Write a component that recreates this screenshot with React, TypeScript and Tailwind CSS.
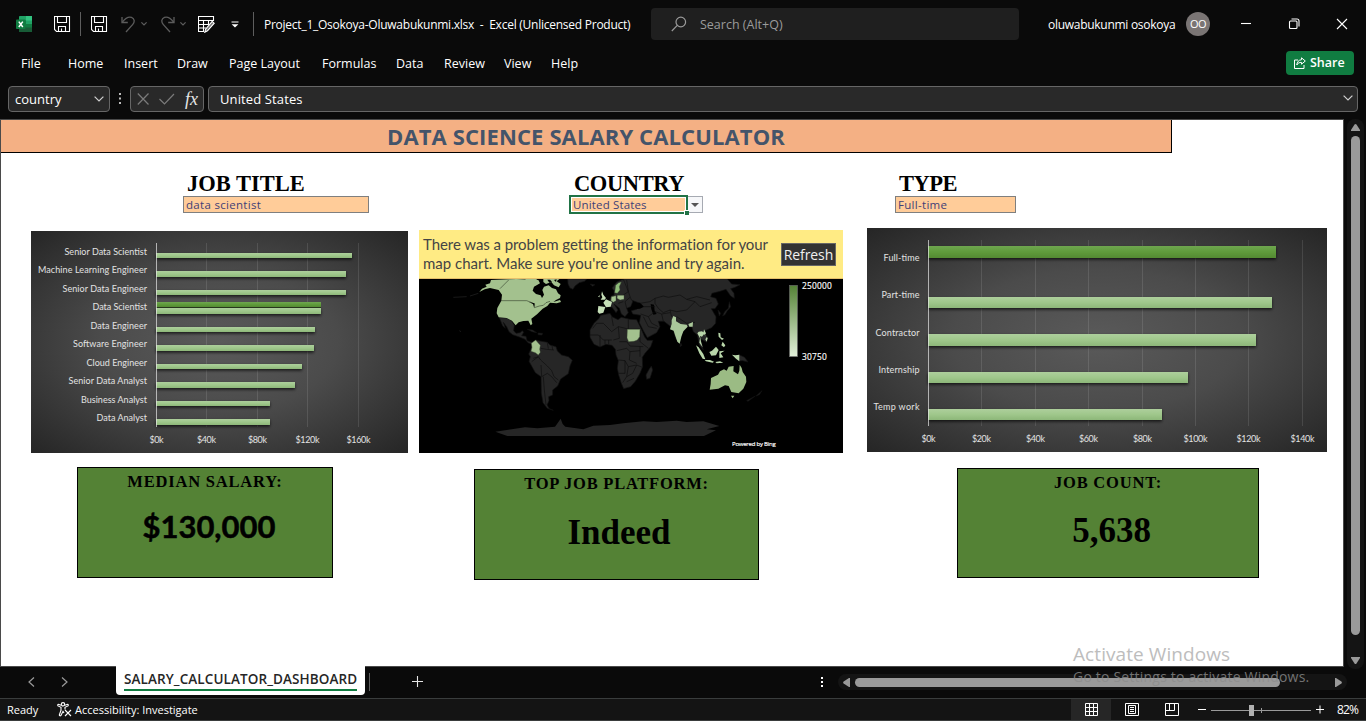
import React from "react";

const ui = "font-['Open_Sans','Noto_Sans',sans-serif]";
const calibri = "font-['Lato','Open_Sans',sans-serif]";
const serif = "font-['Liberation_Serif',serif]";

/* ---------- Icons ---------- */

function ExcelLogo() {
  return (
    <svg width="16" height="16" viewBox="0 0 16 16" className="shrink-0">
      <rect x="3" y="0" width="13" height="16" rx="0.8" fill="#21a366" />
      <rect x="10" y="0" width="6" height="4.5" fill="#33c481" />
      <rect x="3" y="4.5" width="7" height="7" fill="#107c41" />
      <rect x="3" y="11" width="13" height="5" fill="#185c37" />
      <rect x="10" y="8" width="6" height="3.5" fill="#107c41" />
      <rect x="0" y="3.5" width="9.5" height="9.5" rx="0.8" fill="#107c41" />
      <path d="M2.8 5.6 6.8 11M6.8 5.6 2.8 11" stroke="#fff" strokeWidth="1.5" />
    </svg>
  );
}

function SaveIcon() {
  return (
    <svg width="17" height="17" viewBox="0 0 17 17" fill="none" stroke="#fff" strokeWidth="1.1" className="shrink-0">
      <path d="M.5.5H15.5V15.5H2.5L.5 13.5Z" />
      <path d="M3.5.5V6.5H12.5V.5" />
      <path d="M4.5 15.5V10.5H11.5V15.5M7.5 12.5V15.5" />
    </svg>
  );
}

function UndoIcon({ flip }: { flip?: boolean }) {
  return (
    <svg width="15" height="17" viewBox="0 0 15 17" fill="none" stroke="#5c5c5c" strokeWidth="1.3" className={flip ? "shrink-0 -scale-x-100" : "shrink-0"}>
      <path d="M1 1V6.5H6.8" />
      <path d="M1.2 6.3C4.5 2 7.5.4 10.5 1.4c3.2 1.2 3.4 4.6 1.3 7L5 16" />
    </svg>
  );
}

function Chevron({ w = 6, color = "#5c5c5c", sw = 1.2 }: { w?: number; color?: string; sw?: number }) {
  return (
    <svg width={w} height={w * 0.6} viewBox="0 0 10 6" fill="none" stroke={color} strokeWidth={(sw * 10) / w} className="shrink-0">
      <path d="M.6.6 5 5 9.4.6" />
    </svg>
  );
}

function TablePenIcon() {
  return (
    <svg width="17" height="17" viewBox="0 0 17 17" fill="none" stroke="#fff" strokeWidth="1.1" className="shrink-0">
      <path d="M15.5 5V.5H.5V15.5H6M.5 4.5H15.5M.5 8.5H11M.5 12H8M5.5 4.5V15.4M10.5 4.5V9" />
      <path d="M14.2 5.4 16.2 7.2 9.5 14.8 6.8 16.2 7.6 13.2Z" fill="#777" />
    </svg>
  );
}

function ShareIcon() {
  return (
    <svg width="12" height="12" viewBox="0 0 12 12" fill="none" stroke="#fff" strokeWidth="1">
      <path d="M4 3H.5V11.5H10V8" />
      <path d="M7.5.8 11.3 4 7.5 7.2V5.4C5.3 5.3 4 6.1 2.8 8 3 5 4.6 3 7.5 2.7Z" />
    </svg>
  );
}

function AccessibilityIcon() {
  return (
    <svg width="15" height="15" viewBox="0 0 15 15" fill="none" stroke="#fff" strokeWidth="1.1">
      <circle cx="6" cy="2.3" r="1.7" />
      <path d="M4.2 3.3 1.3 2.3Q.3 2.8 1 3.9L4 5.3V8.3L2.3 13Q2.8 14.4 3.9 13.6L6 9.3 7 11M7.8 3.3 10.7 2.3Q11.7 2.8 11 3.9L8 5.3V7.5" />
      <path d="M8 8 14 14M14 8 8 14" />
    </svg>
  );
}

/* ---------- Charts ---------- */

type Bar = { label: string; lw: number; base: number; y: number; h: number; end: number };

const titleBars: Bar[] = [
  { label: "Senior Data Scientist", lw: 82.5, base: 24, y: 22, h: 5, end: 321 },
  { label: "Machine Learning Engineer", lw: 109, base: 42, y: 40, h: 6, end: 315 },
  { label: "Senior Data Engineer", lw: 84.5, base: 61, y: 59, h: 5, end: 315 },
  { label: "Data Scientist", lw: 54.5, base: 79, y: 77, h: 6, end: 290 },
  { label: "Data Engineer", lw: 56.5, base: 98, y: 96, h: 5, end: 284 },
  { label: "Software Engineer", lw: 74, base: 116, y: 114, h: 6, end: 283 },
  { label: "Cloud Engineer", lw: 60.5, base: 135, y: 133, h: 5, end: 271 },
  { label: "Senior Data Analyst", lw: 78.5, base: 153, y: 151, h: 6, end: 264 },
  { label: "Business Analyst", lw: 66, base: 172, y: 170, h: 5, end: 239 },
  { label: "Data Analyst", lw: 50.5, base: 190, y: 188, h: 6, end: 239 },
];

const typeBars: Bar[] = [
  { label: "Full-time", lw: 36, base: 33, y: 18, h: 12, end: 409 },
  { label: "Part-time", lw: 38, base: 70, y: 69, h: 11, end: 405 },
  { label: "Contractor", lw: 44, base: 108, y: 106, h: 12, end: 389 },
  { label: "Internship", lw: 41, base: 145, y: 144, h: 11, end: 321 },
  { label: "Temp work", lw: 46, base: 182, y: 181, h: 11, end: 295 },
];

type ChartProps = {
  id: string;
  w: number;
  h: number;
  axis: number;
  top: number;
  bottom: number;
  labelX: number;
  ticks: { x: number; t: string; w: number }[];
  tickBase: number;
  bars: Bar[];
  accent: { y: number; h: number; end: number };
};

function BarChart({ id, w, h, axis, top, bottom, labelX, ticks, tickBase, bars, accent }: ChartProps) {
  return (
    <svg width={w} height={h} viewBox={`0 0 ${w} ${h}`} className={`block shrink-0 ${calibri}`}>
      <defs>
        <radialGradient id={`${id}-bg`} cx="50%" cy="50%" r="70%">
          <stop offset="0" stopColor="#5a5a5a" />
          <stop offset="0.45" stopColor="#4b4b4b" />
          <stop offset="1" stopColor="#262626" />
        </radialGradient>
        <linearGradient id={`${id}-light`} x2="0" y2="1">
          <stop offset="0" stopColor="#adcf9c" />
          <stop offset="0.5" stopColor="#9fc78b" />
          <stop offset="1" stopColor="#8db779" />
        </linearGradient>
        <linearGradient id={`${id}-dark`} x2="0" y2="1">
          <stop offset="0" stopColor="#6fa650" />
          <stop offset="0.5" stopColor="#5f9b3b" />
          <stop offset="1" stopColor="#548a32" />
        </linearGradient>
        <filter id={`${id}-shadow`} x="-5%" y="-60%" width="110%" height="260%">
          <feDropShadow dx="0" dy="1.6" stdDeviation="1.6" floodColor="#000" floodOpacity="0.7" />
        </filter>
      </defs>
      <rect width={w} height={h} fill={`url(#${id}-bg)`} />
      {ticks.slice(1).map((t) => (
        <path key={t.t} d={`M${t.x + 0.5} ${top}V${bottom}`} stroke="#fff" strokeOpacity="0.11" />
      ))}
      {bars.map((b, i) => (
        <rect
          key={b.label}
          x={axis}
          y={b.y}
          width={b.end - axis}
          height={b.h}
          fill={id === "type" && i === 0 ? `url(#${id}-dark)` : `url(#${id}-light)`}
          filter={`url(#${id}-shadow)`}
        />
      ))}
      {id === "title" && (
        <>
          <rect x={axis} y={accent.y} width={accent.end - axis} height={accent.h + 1} fill="#27361d" />
          <rect x={axis} y={accent.y} width={accent.end - axis} height={accent.h} fill={`url(#${id}-dark)`} />
        </>
      )}
      <path d={`M${axis + 0.5} ${top}V${bottom}`} stroke="#e6e6e6" strokeOpacity="0.7" />
      <g fill="#e2e2e2" fontSize="9">
        {bars.map((b) => (
          <text key={b.label} x={labelX - b.lw} y={b.base} textLength={b.lw}>
            {b.label}
          </text>
        ))}
        {ticks.map((t) => (
          <text key={t.t} x={t.x + 0.5 - t.w / 2} y={tickBase} textLength={t.w}>
            {t.t}
          </text>
        ))}
      </g>
    </svg>
  );
}

const titleTicks = [
  { x: 125, t: "$0k", w: 14 },
  { x: 175, t: "$40k", w: 19 },
  { x: 226, t: "$80k", w: 19 },
  { x: 276, t: "$120k", w: 24 },
  { x: 327, t: "$160k", w: 24 },
];

const typeTicks = [
  { x: 61, t: "$0k", w: 14 },
  { x: 114, t: "$20k", w: 19 },
  { x: 168, t: "$40k", w: 19 },
  { x: 221, t: "$60k", w: 19 },
  { x: 275, t: "$80k", w: 19 },
  { x: 328, t: "$100k", w: 24 },
  { x: 381, t: "$120k", w: 24 },
  { x: 435, t: "$140k", w: 24 },
];

function WorldMap() {
  return (
    <svg width="424" height="174" viewBox="27 357 1272 522" className={`block bg-black ${ui}`}>
      <defs>
        <linearGradient id="legend" x2="0" y2="1">
          <stop offset="0" stopColor="#548235" />
          <stop offset="1" stopColor="#e2f0d9" />
        </linearGradient>
      </defs>
      <g fill="#262626" stroke="#111" strokeWidth="2" strokeLinejoin="round">
        {/* Greenland, Iceland */}
        <path d="M473 357H530L524 364 508 368 495 378 489 388 480 384 474 372ZM540 372 555 374 548 379Z" />
        {/* Mexico and Central America */}
        <path d="M268 473 290 474 305 482 313 496 311 512 318 520 330 518 337 512 341 517 335 527 348 529 351 542 362 546 372 547 368 553 355 549 345 538 328 531 308 524 297 515 290 500 280 487 286 505 278 498Z" />
        <path d="M352 508 368 510 380 518 366 515ZM384 519 398 520 396 525 384 524Z" />
        {/* South America */}
        <path d="M378 540 390 543 412 547 420 555 438 560 442 573 455 585 475 590 487 601 480 618 475 641 452 657 443 678 428 690 428 705 416 710 417 722 411 735 418 746 430 751 412 745 399 728 394 700 393 650 376 638 366 620 357 604 361 590 356 582 364 565 366 548Z" />
        {/* Africa */}
        <path d="M572 466 600 460 606 470 624 479 634 472 660 478 680 479 692 503 704 531 712 541 729 541 722 560 705 580 697 592 698 620 690 640 676 664 662 680 641 686 634 670 626 645 622 625 625 602 618 585 616 568 606 556 588 553 570 561 552 553 540 532 540 510 552 490 566 476Z" />
        <path d="M724 618 728 630 720 655 710 658 708 645 716 630Z" />
        {/* Europe */}
        <path d="M612 392 606 384 620 366 636 359 660 361 670 380 662 400 668 425 662 440 650 445 655 458 645 470 634 462 628 445 612 432 624 450 618 458 606 442 598 440 598 424 604 408 612 405Z" />
        {/* Asia */}
        <path d="M640 357H952L965 372 990 374 975 382 962 386 972 400 973 415 962 408 948 388 930 394 906 400 902 410 918 415 925 432 915 446 904 446 918 470 917 490 905 503 885 512 884 520 894 534 890 547 878 540 872 538 880 570 868 555 862 525 850 515 845 500 830 500 812 525 807 550 797 535 788 505 776 495 762 484 745 484 750 500 740 518 712 533 700 512 688 488 692 466 668 462 664 452 680 448 690 430 664 420 655 395Z" />
        <path d="M958 425 962 440 950 455 945 464 938 468 944 455 955 445ZM924 450 932 460 928 468ZM812 548 816 556 810 560Z" />
        {/* Papua New Guinea, New Zealand */}
        <path d="M987 584 1004 592 1014 606 998 602 987 603ZM1056 692 1048 704 1038 708ZM1036 708 1014 724 1010 722Z" />
        {/* Antarctica */}
        <path stroke="none" d="M256 815 305 808 345 802 382 805 435 800 441 792 452 776 458 792 466 800 520 808 550 797 600 795 640 790 700 784 740 786 800 782 830 786 880 784 928 798 890 808 918 811 882 828H292Z" />
      </g>
      {/* Inland seas */}
      <path fill="#000" d="M664 440 676 430 690 428 702 440 690 446 668 448ZM722 432 732 434 734 452 740 462 730 464 724 448Z" />
      {/* Borders */}
      <g fill="none" stroke="#0d0d0d" strokeWidth="2">
        <path d="M392 565 410 568 432 570M365 605 385 590 392 600 412 618 425 632 432 650 445 660M393 615 395 650 412 640 425 650 440 668M400 650 403 690 408 735M385 590 370 595M412 548 415 566M426 556 428 570" />
        <path d="M560 490 580 490 605 515 625 500 655 507 690 507M605 470 610 498M655 478 655 540M625 500 628 535 610 540M540 525 565 525 580 540 605 540 M570 525 570 560M585 540 585 552M596 540 596 552M628 545 650 545 660 558 700 560M620 572 650 565 660 575 690 572M625 600 645 602 655 620 680 615 697 622M645 602 645 640 625 640M655 620 650 650 668 640 680 615M650 650 638 668M660 575 658 600 680 610M690 510 690 545 715 565M690 560 690 590M560 490 548 505M650 665 672 655" />
        <path d="M650 360 655 395M655 395 640 405M660 412 645 425M645 425 650 445M625 430 640 425M735 415 760 408 775 412 810 405 830 418 855 425 830 450 800 455 780 450 760 458 745 445 735 430ZM830 418 860 410 900 420M855 425 870 440 905 428M700 440 735 440M692 462 715 470 735 455 755 462 780 458M715 470 725 490 745 500M755 462 760 484M780 450 785 470M800 470 830 490 855 487M700 470 715 500 740 505M690 430 720 425 735 415" />
      </g>
      {/* Countries with data */}
      <g fill="#a3c18e" stroke="#3b4a32" strokeWidth="1.2" strokeLinejoin="round">
        <path stroke="none" d="M243 360 295 358 320 357 385 360 390 370 372 380 368 392 378 402 392 406 396 414 402 404 397 390 402 380 416 376 426 384 438 388 444 400 452 406 450 414 438 420 430 426 450 420 453 426 440 430 420 428 412 438 398 446 388 456 382 462 364 476 367 492 362 496 355 482 340 483 326 487 317 496 306 482 290 474 266 472 260 460 262 444 274 422 276 404 266 390 240 384 224 388 208 396 216 386 230 380 226 374 240 370Z" />
        <path stroke="none" d="M345 357H382L374 364 350 362ZM400 357H448L440 364 452 372 446 382 432 376 424 366 408 372 400 366Z" />
        <path fill="none" d="M296 360 270 386M273 422H350L366 428 374 434 373 443 388 438 400 436 408 428 420 424" stroke="#222b1c" strokeWidth="1.6" />
        <path fill="#000" stroke="none" d="M412 359H420L426 366 418 368ZM432 360 440 358 438 366ZM356 426 374 430 372 442 369 432Z" />
        <path d="M377 540 384 548 391 556 389 568 391 577 385 585 376 578 363 574 366 562 364 550Z" />
        <path d="M652 508 690 508 689 530 682 540 672 544 656 545 651 534Z" />
        <path fill="#8fbc79" d="M634 366 628 380 630 390 622 400 614 398 617 376 626 368Z" />
        <path d="M604 410 618 407 618 422 610 427 603 422ZM622 406 642 406 642 418 630 420 621 415Z" />
        <path fill="#c6dfb8" stroke="none" d="M576 394 580 404 588 414 584 419 572 419 577 412 574 404ZM570 405 568 412 564 410ZM588 418 606 426 602 440 588 442 580 428ZM565 438 586 441 580 458 568 461 563 456Z" />
        <path fill="#aac89a" stroke="none" d="M790 468 798 472 798 484 812 492 830 494 833 500 820 514 814 530 809 551 802 545 795 525 791 512 780 508 785 492 785 480ZM835 492 849 486 848 500 838 500Z" />
        <g fill="#b8d5a9" stroke="none">
          <path d="M866 515 876 514 884 520 876 530 870 528 873 545 878 562 868 548 870 535 862 520ZM882 508 888 520 884 526 893 534 890 545 886 538 890 532 880 520ZM858 556 866 562 880 582 886 598 878 596 868 580ZM884 600 900 600 912 605 908 608 888 604ZM898 576 906 572 918 560 926 570 918 586 904 587ZM928 574 944 572 932 580 940 592 928 594ZM925 518 931 520 932 532 942 536 936 540 926 530ZM938 545 946 556 942 562 934 556ZM916 606 930 604 940 608 920 610ZM966 584 976 586 988 584 988 604 978 596Z" />
        </g>
        <path fill="#9bbb84" stroke="none" d="M903 654 924 644 930 634 942 628 950 632 956 620 971 618 970 634 984 643 988 632 989 614 995 624 998 636 1008 650 1009 666 1000 686 986 700 964 696 956 678 945 676 925 686 899 689 902 672ZM963 707 973 707 968 715Z" />
      </g>
      <path d="M148 512 153 515M180 408 205 400M130 412 170 410" stroke="#333" strokeWidth="1.5" />
      <rect x="1138.5" y="376" width="24" height="214" fill="url(#legend)" stroke="#666" strokeWidth="2" />
      <g fill="#fff" stroke="#fff" strokeWidth="0.5">
        <text x="1176" y="388" fontSize="25" textLength="89">250000</text>
        <text x="1176" y="601" fontSize="25" textLength="74">30750</text>
        <text x="966" y="858" fontSize="18" textLength="131">Powered by Bing</text>
      </g>
    </svg>
  );
}

/* ---------- Window chrome ---------- */

function TitleBar() {
  return (
    <div className="flex h-12 items-center text-[12px] text-white">
      <div className="flex w-[262px] items-center pl-4">
        <ExcelLogo />
        <span className="w-[22px]" />
        <SaveIcon />
        <span className="mr-2.5 ml-[9px] h-6 w-px bg-[#5e5e5e]" />
        <SaveIcon />
        <span className="w-[13px]" />
        <UndoIcon />
        <span className="w-[5px]" />
        <Chevron />
        <span className="w-[13px]" />
        <UndoIcon flip />
        <span className="w-[5px]" />
        <Chevron />
        <span className="w-3" />
        <TablePenIcon />
        <svg width="8" height="7" viewBox="0 0 8 7" className="ml-4">
          <path d="M.5 1H7.5" stroke="#fff" />
          <path d="M.6 3.2H7.4L4 6.6Z" fill="#fff" />
        </svg>
        <span className="ml-[14px] h-6 w-px bg-[#5e5e5e]" />
      </div>
      <div className="w-[389px] pt-px pl-0.5 tracking-[-0.25px] whitespace-pre">
        Project_1_Osokoya-Oluwabukunmi.xlsx{"  "}-{"  "}Excel (Unlicensed Product)
      </div>
      <div className="flex h-8 w-[368px] items-center rounded bg-[#1f1f1f] pl-5 text-[#9b9b9b]">
        <svg width="16" height="16" viewBox="0 0 16 16" fill="none" stroke="#9b9b9b" strokeWidth="1.2">
          <circle cx="9.8" cy="6" r="4.8" />
          <path d="M6.3 9.4.8 15" />
        </svg>
        <span className="ml-[13px] pt-0.5 text-[12.5px]">Search (Alt+Q)</span>
      </div>
      <div className="w-[167px] pt-px pl-[29px] tracking-[-0.28px] whitespace-nowrap">oluwabukunmi osokoya</div>
      <div className="flex size-6 items-center justify-center rounded-full bg-[#7a7574] text-[11px] tracking-[-0.5px]">OO</div>
      <svg width="120" height="24" viewBox="0 0 120 24" fill="none" stroke="#fff" strokeWidth="1.1" className="ml-6">
        <path d="M7 11.5H17" />
        <rect x="55.5" y="9" width="7.5" height="7.5" rx="1" />
        <path d="M57.5 7H63Q65 7 65 9V14.5" />
        <path d="M103 7 113 17M113 7 103 17" />
      </svg>
    </div>
  );
}

const menu: [string, string][] = [
  ["File", "w-[47px]"],
  ["Home", "w-[56px]"],
  ["Insert", "w-[53px]"],
  ["Draw", "w-[52px]"],
  ["Page Layout", "w-[93px]"],
  ["Formulas", "w-[74px]"],
  ["Data", "w-[48px]"],
  ["Review", "w-[60px]"],
  ["View", "w-[47px]"],
  ["Help", "w-[60px]"],
];

function MenuBar() {
  return (
    <div className="flex h-[30px] items-center pl-[21px] text-[12.5px] whitespace-nowrap text-white">
      {menu.map(([m, w]) => (
        <span key={m} className={`shrink-0 pt-0.5 ${w}`}>
          {m}
        </span>
      ))}
      <button className="mr-3 ml-auto flex h-6 w-[68px] items-center gap-1 rounded bg-[#107c41] pl-2 text-[12.5px] font-semibold">
        <ShareIcon />
        <span className="pt-px">Share</span>
      </button>
    </div>
  );
}

function FormulaBar() {
  return (
    <div className="flex h-[41px] items-start px-2 pt-2 text-[13px] text-white">
      <div className="flex h-[26px] w-[102px] items-center justify-between rounded border border-[#666] bg-[#292929] pr-[5px] pl-1.5">
        <span className="pt-px">country</span>
        <Chevron w={10} color="#d0d0d0" />
      </div>
      <svg width="3" height="12" className="mt-[7px] ml-[9px]" fill="#bbb">
        <rect width="2" height="2" />
        <rect y="4.5" width="2" height="2" />
        <rect y="9" width="2" height="2" />
      </svg>
      <div className="ml-2 flex h-[26px] w-[74px] items-center rounded border border-[#666] bg-[#292929] pl-1.5">
        <svg width="38" height="12" viewBox="0 0 38 12" fill="none" stroke="#7b7b7b" strokeWidth="1.2">
          <path d="M.8.5 11.5 11.5M11.5.5.8 11.5M22.5 6 27.5 11 37 1" />
        </svg>
        <span className={`ml-2.5 text-[18px] leading-4 text-[#e6e6e6] italic ${serif}`}>fx</span>
      </div>
      <div className="ml-1 flex h-[26px] w-[1150px] items-start justify-between rounded border border-[#666] bg-[#292929] pt-[3px] pr-1 pl-[11px]">
        <span className="tracking-[0.12px]">United States</span>
        <span className="pt-[5px] leading-none">
          <Chevron w={10} color="#d0d0d0" />
        </span>
      </div>
    </div>
  );
}

/* ---------- Worksheet ---------- */

const cell = "flex items-center border border-[#7f7f7f] bg-[#ffcc99] text-[#3f3f76] text-[11.5px]";

function Sheet() {
  return (
    <div className="h-[548px] w-[1344px] overflow-hidden border border-[#4a4a4a] bg-white">
      <div className={`flex h-[33px] w-[1171px] items-center justify-center border-r border-b border-black bg-[#f4b084] text-[22px] font-bold tracking-[0.12px] whitespace-nowrap text-[#44546a] ${ui}`}>
        DATA SCIENCE SALARY CALCULATOR
      </div>

      <div className="flex h-[75px] items-start pt-[19px] pl-[182px]">
        <div className="w-[386px]">
          <h2 className={`h-6 pl-1 text-[22.5px] leading-[23px] font-bold text-black ${serif}`}>JOB TITLE</h2>
          <div className={`h-[17px] w-[186px] pl-0.5 tracking-[0.3px] ${cell}`}>data scientist</div>
        </div>
        <div className="w-[326px]">
          <h2 className={`h-[23px] pl-[5px] text-[22.5px] leading-[23px] font-bold tracking-[-0.4px] text-black ${serif}`}>COUNTRY</h2>
          <div className="flex h-[19px] items-start">
            <div className="relative h-[19px] w-[119px] border-2 border-[#217346] bg-white p-px">
              <div className="flex h-[13px] items-center bg-[#ffcc99] pl-px text-[11.5px] tracking-[0.15px] text-[#3f3f76]">United States</div>
              <span className="absolute -right-[3px] -bottom-[3px] size-[5px] border-t border-l border-white bg-[#217346]" />
            </div>
            <div className="mt-px -ml-px flex h-[17px] w-4 items-center justify-center border border-[#a6aab2] bg-[#f6f7f9]">
              <svg width="8" height="4" fill="#555">
                <path d="M0 0H8L4 4Z" />
              </svg>
            </div>
          </div>
        </div>
        <div>
          <h2 className={`h-6 pl-1 text-[22.5px] leading-[23px] font-bold tracking-[-0.5px] text-black ${serif}`}>TYPE</h2>
          <div className={`h-[17px] w-[121px] pl-0.5 tracking-[0.3px] ${cell}`}>Full-time</div>
        </div>
      </div>

      <div className="flex h-[238px] items-start pl-[30px]">
        <div className="mt-[3px] mr-[11px]">
          <BarChart
            id="title"
            w={377}
            h={222}
            axis={125}
            top={12}
            bottom={196}
            labelX={116}
            ticks={titleTicks}
            tickBase={212}
            bars={titleBars}
            accent={{ y: 71, h: 5, end: 290 }}
          />
        </div>
        <div className="mt-0.5 mr-6 w-[424px]">
          <div className={`flex h-[49px] items-center justify-between border-b border-[#e5c06c] bg-[#ffeb84] pr-[7px] pl-1 ${calibri}`}>
            <div className="text-[15px] leading-[19px] whitespace-nowrap text-[#444]">
              <p className="tracking-[-0.06px]">There was a problem getting the information for your</p>
              <p>map chart. Make sure you're online and try again.</p>
            </div>
            <div className={`flex h-[23px] w-[55px] items-center justify-center border border-[#666] bg-[#333] text-[14px] tracking-[-0.1px] text-[#f0f0f0] ${ui}`}>Refresh</div>
          </div>
          <WorldMap />
        </div>
        <BarChart
          id="type"
          w={460}
          h={224}
          axis={61}
          top={12}
          bottom={198}
          labelX={52.5}
          ticks={typeTicks}
          tickBase={214}
          bars={typeBars}
          accent={{ y: 18, h: 12, end: 409 }}
        />
      </div>

      <div className={`flex items-start pl-[76px] font-bold text-black ${serif}`}>
        <div className="mt-px flex h-[111px] w-[256px] flex-col items-center border border-black bg-[#548235]">
          <div className="mt-[5px] text-[16.5px] leading-[18px] tracking-[0.8px]">MEDIAN SALARY:</div>
          <div className={`mt-[15px] ml-2 text-[31px] leading-10 [-webkit-text-stroke:0.5px_#000] ${calibri}`}>$130,000</div>
        </div>
        <div className="mt-[3px] ml-[141px] flex h-[111px] w-[285px] flex-col items-center border border-black bg-[#548235]">
          <div className="mt-[5px] text-[16.5px] leading-[18px] tracking-[0.75px]">TOP JOB PLATFORM:</div>
          <div className="mt-5 ml-[5px] text-[35px] leading-10">Indeed</div>
        </div>
        <div className="mt-0.5 ml-[198px] flex h-[110px] w-[302px] flex-col items-center border border-black bg-[#548235]">
          <div className="mt-[5px] text-[16.5px] leading-[18px] tracking-[0.8px]">JOB COUNT:</div>
          <div className="mt-[19px] ml-[7px] text-[35px] leading-10">5,638</div>
        </div>
      </div>
    </div>
  );
}

function VerticalScroll() {
  return (
    <div className="ml-[3px] flex h-[550px] w-[17px] flex-col items-center rounded-lg bg-[#141414] pt-[5px]">
      <svg width="9" height="7" fill="#9a9a9a">
        <path d="M3.5.6Q4.5-.4 5.5.6L9 6V7H0V6Z" />
      </svg>
      <div className="mt-[5px] h-[499px] w-[9px] rounded-full bg-[#9a9a9a]" />
      <svg width="9" height="7" fill="#9a9a9a" className="mt-[22px]">
        <path d="M0 0H9V1L5.5 6.4Q4.5 7.4 3.5 6.4L0 1Z" />
      </svg>
    </div>
  );
}

function TabBar() {
  return (
    <div className="flex h-[31px] items-start">
      <svg width="116" height="31" fill="none" stroke="#9a9a9a" strokeWidth="1.2">
        <path d="M34 10.5 29 15 34 19.5M62 10.5 67 15 62 19.5" />
      </svg>
      <div className="-mt-px flex h-[29px] w-[249px] justify-center rounded-b bg-white pt-px">
        <div className="h-6 w-[233px] border-b-2 border-[#107c41] text-[13.5px] leading-6 font-semibold tracking-[0.1px] whitespace-nowrap text-[#262626]">
          SALARY_CALCULATOR_DASHBOARD
        </div>
      </div>
      <span className="mt-1.5 ml-1 h-[18px] w-px bg-[#5e5e5e]" />
      <svg width="12" height="12" stroke="#e6e6e6" strokeWidth="1.1" className="mt-[9px] ml-[42px]">
        <path d="M0 5.5H11M5.5 0V11" />
      </svg>
      <svg width="2" height="11" fill="#fff" className="mt-2.5 ml-[397px]">
        <rect width="2" height="2" />
        <rect y="4" width="2" height="2" />
        <rect y="8" width="2" height="2" />
      </svg>
      <div className="mt-[7px] ml-[15px] flex h-4 w-[509px] items-center rounded-full bg-[#141414] pl-[5px]">
        <svg width="7" height="9" fill="#9a9a9a">
          <path d="M7 0V9H6L.6 5.5Q-.4 4.5.6 3.5L6 0Z" />
        </svg>
        <div className="ml-[5px] h-[9px] w-[425px] rounded-full bg-[#9a9a9a]" />
        <svg width="7" height="9" fill="#9a9a9a" className="ml-[55px]">
          <path d="M0 0V9H1L6.4 5.5Q7.4 4.5 6.4 3.5L1 0Z" />
        </svg>
      </div>
    </div>
  );
}

function StatusBar() {
  return (
    <div className="flex h-[23px] items-center border-y border-[#3a3d3d] bg-[#141414] text-[11px] whitespace-nowrap text-white">
      <span className="w-[57px] pt-px pl-[7px] font-medium">Ready</span>
      <AccessibilityIcon />
      <span className="w-[1002px] pt-px pl-[3px] font-medium">Accessibility: Investigate</span>
      <div className="-ml-[3px] flex h-full w-10 items-center justify-center bg-[#262626]">
        <svg width="13" height="13" fill="none" stroke="#fff">
          <path d="M.5.5H12.5V12.5H.5ZM4.5 0V13M8.5 0V13M0 4.5H13M0 8.5H13" />
        </svg>
      </div>
      <svg width="14" height="13" fill="none" stroke="#fff" className="ml-[14px]">
        <path d="M.5.5H13.5V12.5H.5ZM3.5 2.5H10.5V10.5H3.5ZM5 4.5H9M5 6.5H9M5 8.5H9" />
      </svg>
      <svg width="14" height="13" fill="none" stroke="#fff" className="ml-[26px]">
        <path d="M.5.5H13.5V12.5H.5ZM4.5 0V7.5M9.5 0V7.5M0 7.5H9.5" />
      </svg>
      <svg width="128" height="13" className="ml-[18px]">
        <path d="M1 6.5H9M119 6.5H127M123 2.5V10.5" stroke="#fff" />
        <path d="M14 7.5H114M64.5 5V10" stroke="#9a9a9a" />
        <rect x="52" y="2" width="5" height="11" fill="#b0b0b0" />
      </svg>
      <span className="ml-3 text-[12px] tracking-[-0.8px]">82%</span>
    </div>
  );
}

export default function App() {
  return (
    <div className={`relative flex h-[721px] w-[1366px] flex-col overflow-hidden bg-[#0a0a0a] ${ui}`}>
      <TitleBar />
      <MenuBar />
      <FormulaBar />
      <div className="flex h-[548px]">
        <Sheet />
        <VerticalScroll />
      </div>
      <TabBar />
      <StatusBar />
      <div className="pointer-events-none absolute top-[642px] left-[1073px] whitespace-nowrap">
        <div className="text-[19px] leading-6 tracking-[0.08px] text-[#bdbdbd]">Activate Windows</div>
        <div className="pt-px text-[14px] leading-5 tracking-[0.2px] text-[#8c8c8c]/80">Go to Settings to activate Windows.</div>
      </div>
    </div>
  );
}
